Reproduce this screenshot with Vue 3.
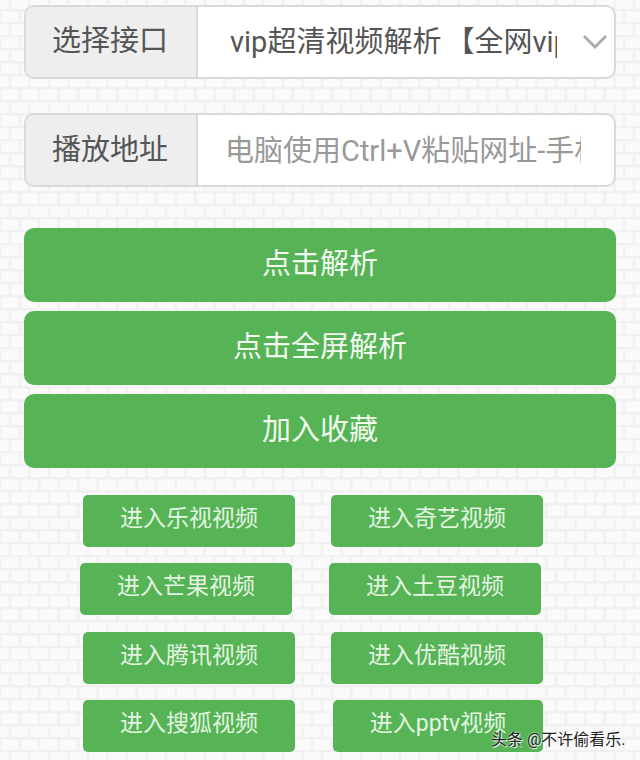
<script setup>
const links = [
  { cls: 'r1', items: ['进入乐视视频', '进入奇艺视频'] },
  { cls: 'r2', items: ['进入芒果视频', '进入土豆视频'] },
  { cls: 'r3', items: ['进入腾讯视频', '进入优酷视频'] },
  { cls: 'r4', items: ['进入搜狐视频', '进入pptv视频'] },
]
</script>

<template>
  <div class="page">
    <div class="group">
      <div class="label">选择接口</div>
      <div class="field select">
        <span class="clip value">vip超清视频解析<span class="bracket">【</span>全网vip</span>
        <svg class="chev" width="26" height="15" viewBox="0 0 26 15"><path d="M2 2 L13 13 L24 2" fill="none" stroke="#aaa" stroke-width="2.8"/></svg>
      </div>
    </div>
    <div class="group second">
      <div class="label">播放地址</div>
      <div class="field input">
        <span class="clip hint">电脑使用Ctrl+V粘贴网址-手机</span>
      </div>
    </div>
    <div class="bigs">
      <button class="big">点击解析</button>
      <button class="big">点击全屏解析</button>
      <button class="big">加入收藏</button>
    </div>
    <div class="links">
      <div v-for="row in links" :key="row.cls" class="row" :class="row.cls">
        <a v-for="t in row.items" :key="t" class="small">{{ t }}</a>
      </div>
    </div>
    <div class="mark">头条 @不许偷看乐.</div>
  </div>
</template>

<style scoped>
.page {
  position: relative;
  width: 640px;
  height: 760px;
  overflow: hidden;
  box-sizing: border-box;
  padding: 5px 24px 0 24px;
  font-family: Roboto, "Noto Sans CJK SC", sans-serif;
  background-color: #f1f1f1;
  background-image: url("data:image/svg+xml,%3Csvg xmlns='http://www.w3.org/2000/svg' width='39' height='26' viewBox='0 0 39 26'%3E%3Cg fill='%23fafafa'%3E%3Crect x='1.5' y='1.5' width='17' height='10.5' rx='1'/%3E%3Crect x='21' y='1.5' width='17' height='10.5' rx='1'/%3E%3Crect x='-8.25' y='14.5' width='17' height='10.5' rx='1'/%3E%3Crect x='11.25' y='14.5' width='17' height='10.5' rx='1'/%3E%3Crect x='30.75' y='14.5' width='17' height='10.5' rx='1'/%3E%3C/g%3E%3C/svg%3E");
  background-size: 39px 26px;
  background-position: 0 10px;
}
.group {
  display: flex;
  height: 74px;
  box-sizing: border-box;
  border: 2px solid #d9d9d9;
  border-radius: 10px;
  overflow: hidden;
  background: #fff;
}
.second { margin-top: 34px; }
.label {
  width: 172px;
  box-sizing: border-box;
  padding-left: 26px;
  padding-bottom: 8px;
  flex: none;
  display: flex;
  align-items: center;
  background: #eeeeee;
  border-right: 2px solid #d9d9d9;
  color: #555;
  font-size: 29px;
}
.second .label { padding-bottom: 6px; }
.field {
  flex: 1;
  display: flex;
  align-items: center;
  min-width: 0;
  position: relative;
}
.clip { display: block; overflow: hidden; white-space: nowrap; }
.value { margin-left: 32px; width: 327px; color: #555; font-size: 29px; padding-bottom: 6px; }
.bracket { display: inline-block; width: 33px; text-align: right; }
.hint { margin-left: 27px; width: 356px; color: #999; font-size: 29px; padding-bottom: 4px; }
.chev { position: absolute; right: 6px; top: 27px; }
.bigs { margin-top: 41px; display: flex; flex-direction: column; gap: 9px; }
.big {
  display: block;
  height: 74px;
  width: 100%;
  border: none;
  border-radius: 10px;
  background: #56b356;
  color: #f2faf0;
  font: inherit;
  font-size: 29px;
  padding: 0 0 9px;
}
.links { margin-top: 27px; display: flex; flex-direction: column; gap: 16px; }
.row { display: flex; height: 52px; }
.small {
  width: 212px;
  height: 52px;
  box-sizing: border-box;
  display: flex;
  align-items: center;
  justify-content: center;
  padding-bottom: 10px;
  background: #56b356;
  border-radius: 5px;
  color: #e3f5e0;
  font-size: 23px;
  white-space: nowrap;
}
.r1, .r3 { padding-left: 59px; gap: 36px; }
.r2 { padding-left: 56px; gap: 37px; }
.r4 { padding-left: 59px; gap: 38px; }
.r4 .small:last-child { width: 210px; }
.r3 { margin-top: 1px; }
.mark {
  position: absolute;
  left: 491px;
  top: 726px;
  color: #222;
  font-size: 16px;
  text-shadow: 0 0 2px #fff, 1px 1px 1px #fff;
  white-space: nowrap;
}
</style>
